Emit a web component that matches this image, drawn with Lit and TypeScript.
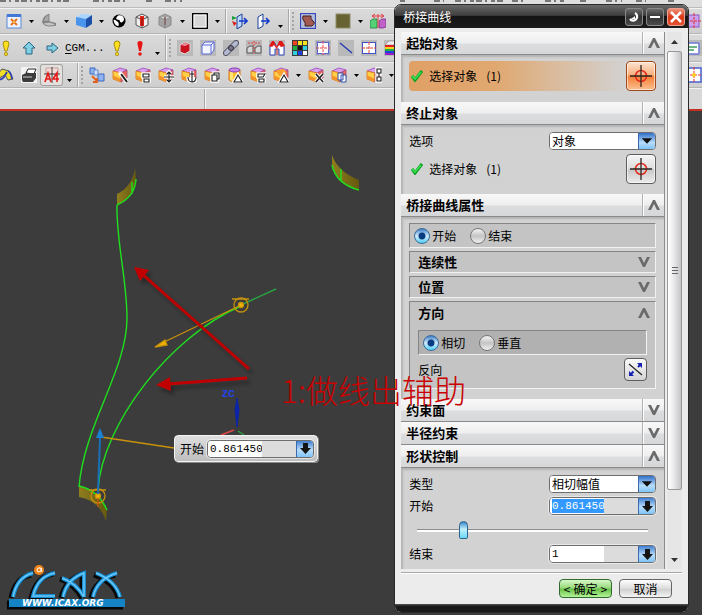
import { LitElement, html, svg, css, SVGTemplateResult, TemplateResult } from "lit";
import { customElement, property } from "lit/decorators.js";
import { classMap } from "lit/directives/class-map.js";

/* ---------- toolbar glyphs, all on a 16 x 16 grid ---------- */

const feature = svg`
  <path d="M1 4 8 1l7 2-6 3z" fill="#d9a0f0" stroke="#9a48c0" stroke-width=".8"/>
  <path d="M1 4l8 2v9l-8-3z" fill="#ffd048" stroke="#e07818" stroke-width=".9"/>
  <path d="M1.500 8.500l7 3.500v2.500l-7-3z" fill="#f59028"/>
  <path d="M9 6l6-3v8l-6 4z" fill="#e86858" stroke="#b04878" stroke-width=".8"/>`;
const badge = (d: string) => svg`
  <path d="${d}" fill="none" stroke="#fff" stroke-width="3.500"/>
  <path d="${d}" fill="#fff" stroke="#1c1c1c" stroke-width="1.100"/>`;
const withBadge = (d: string) => svg`${feature}${badge(d)}`;
const tile = svg`<rect width="16" height="16" fill="#b9b9b9"/>`;

const glyphs: Record<string, SVGTemplateResult> = {
  fit: svg`<rect x="1" y="2" width="14" height="13" fill="#eef2ff" stroke="#5b88d8"/><rect x="1" y="1" width="14" height="3" fill="#4478d8"/>
    <path d="M5 6l6 6M11 6l-6 6" stroke="#e8701c" stroke-width="2"/><path d="M8 8v2" stroke="#f8c040" stroke-width="2"/>`,
  pie: svg`<path d="M8 8V1Q2 2 1 9a7 5 0 0 0 7 4h7l0-3z" fill="#909090"/><path d="M2 10a7 4 0 0 0 13 1l-7-2z" fill="#c4c4c4" stroke="#777" stroke-width=".8"/>
    <path d="M8 8V1Q3 3 2 9z" fill="#a9a9a9" stroke="#777" stroke-width=".8"/>`,
  cube: svg`<path d="M0 4l6-3 10 1-6 4z" fill="#a9d4ff"/><path d="M0 4l10 2v9l-10-3z" fill="#4a94ec"/><path d="M10 6l6-4v9l-6 4z" fill="#1d4fa8"/>`,
  sphere: svg`<circle cx="8" cy="8" r="6.500" fill="#000"/><path d="M7 2.500q3-1 5 1 2 3 0 5-2 2-3 0 0-2-3-2-2-1 1-4z" fill="#fff"/>
    <path d="M2.500 7q1-1 3 1 3 1 2 5-4 0-5-6z" fill="#fff"/>`,
  wire: svg`<path d="M2 4l6-3 6 3v8l-6 3-6-3zM2 4l6 3 6-3M8 7v8" fill="#eee" stroke="#555"/><path d="M6 3h4v10H6z" fill="#e02418"/><path d="M8 5v8" stroke="#801010"/>`,
  wireGray: svg`<path d="M2 4l6-3 6 3v8l-6 3-6-3zM2 4l6 3 6-3M8 7v8" fill="#a4a4a4" stroke="#8a8a8a"/><path d="M8 4v8" stroke="#8a7070" stroke-width="2"/>`,
  white: svg`<rect x=".75" y=".75" width="14.500" height="14.500" fill="#d6d6d6" stroke="#000" stroke-width="1.500"/><rect x="2" y="2" width="12" height="12" fill="none" stroke="#fff"/>`,
  doorIn: svg`<path d="M5 4l5-3v12l-5 3z" fill="#bcd8ff" stroke="#1a3f98"/><path d="M7 8h8M12 5l3 3-3 3" fill="none" stroke="#1238d0" stroke-width="1.600"/>
    <path d="M0 3v4l5-2z" fill="#18a038"/><path d="M0 8l5 2-3 3z" fill="#d82020"/>`,
  doorOut: svg`<path d="M3 4l5-3v12l-5 3z" fill="#fff" stroke="#1a3f98"/><path d="M6 8h8M11 5l3 3-3 3" fill="none" stroke="#1238d0" stroke-width="1.600"/>`,
  film: svg`<rect x=".5" y=".5" width="15" height="15" fill="#b4bcdc" stroke="#3448b8" stroke-width="1.200"/><path d="M3 3h8q-1 3 2 5t-1 5H5q1-3-1-5T3 3z" fill="#a25a52" stroke="#40201c"/>`,
  olive: svg`<rect x="1" y="1" width="14" height="14" fill="#666231" stroke="#8f8d6d"/>`,
  pair: svg`<path d="M0 8l3-2h4v9H0z" fill="#55d278" stroke="#178038" stroke-width=".8"/><path d="M9 8l3-2h4v8l-3 1H9z" fill="#c060c8" stroke="#803090" stroke-width=".8"/>
    <path d="M2 3h12M5 1L2 3l3 2M11 1l3 2-3 2M8 1v14" fill="none" stroke="#e04040"/>`,
  magenta: svg`<rect x="1" y="2" width="12" height="12" fill="#c9a0f0" stroke="#9058c8"/><path d="M8 0v16M0 8h16" stroke="#e83030" stroke-dasharray="3 1"/>`,
  bangY: svg`<path d="M8 1q3 0 3 3L9 11H7L5 4q0-3 3-3z" fill="#ffe020" stroke="#a08400" stroke-width=".9"/><circle cx="8" cy="14" r="1.600" fill="#ffe020" stroke="#a08400" stroke-width=".8"/>`,
  bangR: svg`<path d="M8 1q3 0 2.500 3L9 11H7L5.500 4Q5 1 8 1z" fill="#e81414"/><circle cx="8" cy="14" r="1.800" fill="#e81414"/>`,
  up: svg`<path d="M8 2l6 6h-3v6H5V8H2z" fill="#7fd0e4" stroke="#2a6480"/>`,
  right: svg`<path d="M14 8L8 3v3H3v4h5v3z" fill="#7fd0e4" stroke="#2a6480"/>`,
  red: svg`${tile}<path d="M3 5l5-3 5 2v7l-5 3-5-2z" fill="#c81420" stroke="#ddd" stroke-width="1"/><path d="M4 5l4-2 4 1-4 2z" fill="#f090a0"/>`,
  box: svg`${tile}<path d="M2 5l3-3h9v8l-3 4H2zM2 5h9v9M11 5l3-3" fill="#f4f6ff" stroke="#5868d8"/>`,
  link: svg`${tile}<path d="M3 13L13 3" stroke="#556" stroke-width="6" stroke-linecap="round"/><path d="M3 13L13 3" stroke="#b4bad0" stroke-width="4" stroke-linecap="round"/><circle cx="8" cy="8" r="2.500" fill="#778" stroke="#334"/>`,
  split: svg`${tile}<path d="M1 8l3-2h3v7H1zM9 8l3-2h3v7H9z" fill="#d8d8d8" stroke="#555"/><path d="M2 3h5M9 3h5M8 1v13" stroke="#e04040" stroke-dasharray="2 1"/>`,
  magnet: svg`${tile}<path d="M1 15V6l4-4 3 5 3-5 4 4v9h-5V9H6v6z" fill="#fff" stroke="#3048c0"/><path d="M0 6l3-5h2l2 5 1 0 2-5h3l3 5-4 1-2-2-2 3H7L5 5 3 7z" fill="#e01818"/><path d="M8 6v9" stroke="#e04040"/>`,
  palette: svg`<rect width="16" height="16" fill="#3c3c3c"/><path d="M1 1h4v4H1z" fill="#f04020"/><path d="M6 1h4v4H6z" fill="#f4e420"/><path d="M11 1h4v4h-4z" fill="#f4e420"/>
    <path d="M1 6h4v4H1z" fill="#20b040"/><path d="M6 6h4v4H6z" fill="#111"/><path d="M11 6h4v4h-4z" fill="#30d0e0"/><path d="M1 11h4v4H1z" fill="#30d0e0"/><path d="M6 11h4v4H6z" fill="#2040e0"/><path d="M11 11h4v4h-4z" fill="#fff"/>`,
  cross: svg`${tile}<path d="M2 2q3 1 6 0 3 1 6 0-1 3 0 6-1 3 0 6-3-1-6 0-3-1-6 0 1-3 0-6 1-3 0-6z" fill="#fff" stroke="#4050c8"/><path d="M8 1v14M1 8h14" stroke="#e84040" stroke-dasharray="3 1"/>`,
  line: svg`${tile}<path d="M2 3l12 10" stroke="#2038b8" stroke-width="1.300"/>`,
  grid: svg`${tile}<rect x="1.500" y="2.500" width="13" height="11" fill="#fff" stroke="#4050c8"/><path d="M8 2v12M1 8h14" stroke="#e84040" stroke-dasharray="3 1"/>`,
  rainbow: svg`${tile}<path d="M1 5l4-4h11v4z" fill="#eee" stroke="#888" stroke-width=".6"/><path d="M1 6h15" stroke="#e02020" stroke-width="2"/><path d="M1 8h15" stroke="#f4d020" stroke-width="2"/><path d="M1 10h15" stroke="#20b040" stroke-width="2"/><path d="M1 12h15" stroke="#2040e0" stroke-width="2"/><path d="M1 14h15" stroke="#9020c0" stroke-width="2"/>`,
  sheet: svg`${tile}<rect x="1" y="3" width="12" height="11" rx="1" fill="#fff" stroke="#6878d8" stroke-width="1.500"/><path d="M3 7h8M3 10h5" stroke="#38a060" stroke-width="1.500"/>`,
  paint: svg`<path d="M4 2l7 2 4 8-5 1-3-5-6 3-2-3z" fill="#f0e028" stroke="#555"/><path d="M0 11q3 3 6-1l3-5M10 4q3 1 4 8" fill="none" stroke="#3040b0" stroke-width="1.800"/>`,
  printer: svg`<rect width="16" height="16" fill="#f4f4f4"/><path d="M5 6l2-4h8l-2 5z" fill="#fff" stroke="#222"/><path d="M1 8l4-2h10v5l-3 4H2l-1-2z" fill="#3c3c3c"/><path d="M2 10h9" stroke="#ccc"/>`,
  a4: svg`<path d="M2 1h12v6H2z" fill="#f4dcd8" stroke="#c0a0a0"/><path d="M8 0v16M0 7h16" stroke="#222" stroke-width=".8"/><path d="M1 15l3-9 3 9M2 12h4M13 15V6l-4 6h6" fill="none" stroke="#e81818" stroke-width="1.600"/>`,
  sketch: svg`<path d="M1 1h5v6H1zM9 7h6v7H9z" fill="#8fb4f0" stroke="#3c68c0"/><path d="M5 3h4v5H5z" fill="#d0e0ff" stroke="#5c88d0"/><path d="M3 9l5 5M8 11v4H4" fill="none" stroke="#e06020" stroke-width="1.800"/>`,
  wand: svg`${feature}<path d="M8 6l7 9" stroke="#fff" stroke-width="4"/><path d="M9 7l6 8" stroke="#1c1c1c" stroke-width="2"/><path d="M8 4v4M6 6h4" stroke="#fff"/>`,
  revolve: withBadge("M8 7h6v3H8zM9 12h5v3H9z"),
  move: withBadge("M11 5v10M6 10h10M9 7l2-2 2 2M9 13l2 2 2-2"),
  anchor: withBadge("M11 4v11M7 10q0 5 4 5t4-5M9 7h4"),
  copyBox: withBadge("M8 8h5v6H8zM10 8V6h5v6h-2"),
  cyl: svg`<path d="M2 3v10q6 4 11 0V3z" fill="#ffc030" stroke="#d87818"/><path d="M3 4v9q2 1 3 1V4z" fill="#ffe478"/><ellipse cx="7.500" cy="3" rx="5.500" ry="2" fill="#c880e8" stroke="#8040b0"/>${badge("M11 8l4 7H7z")}`,
  stack: withBadge("M8 7h7l-2 3H8zM9 12h5v3H9z"),
  tri: svg`${feature}<path d="M3 3l8-1 3 4-8 3z" fill="#f8a030"/>${badge("M11 8l4 7H7z")}`,
  del: svg`${feature}<path d="M8 7l7 8M15 7l-7 8" stroke="#fff" stroke-width="3.500"/><path d="M8 7l7 8M15 7l-7 8" stroke="#222" stroke-width="1.600"/>`,
  doc: svg`${feature}<path d="M7 6h5v7H7zM10 8h5v7h-5z" fill="#fff" stroke="#3050a8"/>`,
  tree: withBadge("M11 2h4v4h-4zM11 10h4v4h-4zM13 6v4"),
  target: svg`<rect x="1" y="1" width="14" height="14" fill="#fff" stroke="#4860d0" stroke-width="1.500"/><path d="M8 0v16M0 8h16" stroke="#e83030" stroke-dasharray="3 1"/><circle cx="8" cy="8" r="2" fill="#f8d020"/>`,
};

/* Entry syntax: glyph name, "v" / "w" for a drop arrow (middle / low), "|" separator, ":" grip, "T" text button, ">" push to the end */
const rowOne = ["fit", "v", "pie", "v", "cube", "v", "sphere", "wire", "wireGray", "v", "white", "v", "|", "doorIn", "doorOut", "w", "|", ":", "film", "v", "olive", "v", "pair", ">", "magenta"];
const rowTwo = ["bangY", "up", "right", "T", "bangY", "bangR", "w", "|", ":", "red", "box", "link", "split", "magnet", "palette", "cross", "line", "grid", "rainbow", ">", "sheet"];
const rowThree = ["paint", "printer", "a4", "w", "|", ":", "sketch", "wand", "revolve", "move", "anchor", "copyBox", "cyl", "stack", "tri", "v", "del", "doc", "v", "tree", "v", ">", "target"];

@customElement("tool-row")
export class ToolRow extends LitElement {
  @property({ attribute: false }) items: string[] = [];
  static styles = css`
    :host { display: flex; align-items: center; overflow: hidden; }
    button { border: 0; background: none; padding: 0; margin: 0; color: #000; flex: none; }
    .tool { width: 23px; height: 22px; display: grid; place-items: center; }
    .tool svg { width: 16px; height: 16px; display: block; }
    .framed { box-shadow: inset 0 0 0 1px #a2a2a2; background: #e4e0dc; border-radius: 3px; }
    .drop { width: 12px; height: 22px; display: grid; place-items: center; }
    .low { align-items: end; padding-bottom: 4px; }
    .drop svg { width: 5px; height: 3px; display: block; }
    .text { width: 42px; font: 11px "Liberation Mono", monospace; text-align: left; padding-left: 2px; white-space: nowrap; overflow: hidden; }
    .text u { text-underline-offset: 2px; }
    .sep { flex: none; width: 5px; align-self: stretch; background: linear-gradient(90deg, transparent 2px, #a8a8a8 2px, #a8a8a8 3px, #f4f4f4 3px, #f4f4f4 4px, transparent 4px); }
    .grip { flex: none; width: 5px; height: 18px; background: repeating-linear-gradient(180deg, #a4a4a4 0 2px, transparent 2px 4px); background-size: 2px 18px; background-repeat: no-repeat; background-position: 1px 0; }
    .push { flex: 1; }
  `;
  private item(name: string): TemplateResult {
    if (name === "|") return html`<span class="sep"></span>`;
    if (name === ":") return html`<span class="grip"></span>`;
    if (name === ">") return html`<span class="push"></span>`;
    if (name === "T") return html`<button class="text"><u>C</u>GM...</button>`;
    if (name === "v" || name === "w")
      return html`<button class=${classMap({ drop: true, low: name === "w" })} aria-label="more"><svg viewBox="0 0 5 3"><path d="M0 0h5L2.500 3z"/></svg></button>`;
    return html`<button class=${classMap({ tool: true, framed: name === "a4" })} aria-label=${name}><svg viewBox="0 0 16 16">${glyphs[name]}</svg></button>`;
  }
  render() {
    return html`${this.items.map((n) => this.item(n))}`;
  }
}

/* Value box with a short text area and a blue drop button */
@customElement("value-box")
export class ValueBox extends LitElement {
  @property() value = "";
  @property() label = "";
  @property({ type: Boolean }) marked = false;
  static styles = css`
    :host { display: flex; box-sizing: border-box; width: 107px; height: 18px; border: 1px solid #6e6e6e; border-radius: 4px; background: #dcdcdc; overflow: hidden; box-shadow: 0 0 0 1px #ffffff80; }
    input { box-sizing: border-box; width: 54px; border: 0; padding: 0 0 0 2px; margin: 0; outline: 0; background: #fff; color: #000; font: 11px "Liberation Mono", monospace; }
    input.marked { background: #3399ff; color: #fff; border: 1px solid #fff; border-width: 1px 0 1px 2px; padding-left: 0; }
    button { margin-left: auto; width: 17px; border: 0; border-left: 1px solid #3b68b0; padding: 0; display: grid; place-items: center; background: linear-gradient(#3f7fd0, #b8dcfa 55%, #7fc4f8); }
    svg { width: 11px; height: 11px; display: block; }
  `;
  render() {
    return html`<input class=${classMap({ marked: this.marked })} aria-label=${this.label} .value=${this.value} />
      <button aria-label="options"><svg viewBox="0 0 11 11"><path d="M3 0h5v5h3L5.500 11 0 5h3z" fill="#141414"/></svg></button>`;
  }
}

const chevron = (open: boolean) =>
  html`<svg class="chev" viewBox="0 0 12 12"><path d=${open ? "M0 11L5 1h2l5 10H9L6 5 3 11z" : "M0 1l5 10h2l5-10H9L6 7 3 1z"} fill="#6a6a6a"/></svg>`;
const tick = html`<svg class="tick" viewBox="0 0 12 12"><path d="M1 6l3 4L11 1" fill="none" stroke="#0ca024" stroke-width="3.200"/><path d="M1 6l3 3 6-7" fill="none" stroke="#35dc4c" stroke-width="1.800"/></svg>`;
const aim = html`<svg viewBox="0 0 22 22"><circle cx="11" cy="11" r="5.500" fill="none" stroke="#e42a1c" stroke-width="1.500"/><path d="M11 0v22M0 11h22" stroke="#2c2420" stroke-width="1.300"/></svg>`;

@customElement("bridge-dialog")
export class BridgeDialog extends LitElement {
  static styles = css`
    :host { display: flex; flex-direction: column; box-sizing: border-box; border: 1px solid #2a2a2a; border-radius: 7px; background: #ececec; overflow: hidden; color: #000; font: 12px/16px "Noto Sans CJK SC", "Liberation Sans", sans-serif; }
    * { box-sizing: border-box; }
    button { font: inherit; color: inherit; margin: 0; padding: 0; }
    .title { flex: none; height: 23px; padding: 0 3px 0 8px; display: flex; align-items: center; gap: 3px; background: linear-gradient(#6a6a6a, #3e3e3e 45%, #141414 50%, #1c1c1c); color: #fff; }
    .title h1 { flex: 1; margin: 0; font: inherit; }
    .win { width: 18px; height: 18px; border: 1px solid #8a8a8a; border-radius: 3px; background: linear-gradient(#6c6c6c, #333 50%, #4a4a4a); display: grid; place-items: center; }
    .win svg { width: 12px; height: 12px; display: block; }
    .close { background: linear-gradient(#f09078, #d83818 50%, #e85030); border-color: #e8a090; }
    .main { flex: 1; min-height: 0; display: flex; gap: 2px; margin: 4px 6px 0; }
    .list { flex: 1; min-width: 0; overflow: hidden; border-right: 1px solid #8c8c8c; }
    .head { width: 100%; height: 23px; border: 0; border-bottom: 1px solid #8a8a8a; padding: 0 0 0 5px; display: flex; align-items: center; background: linear-gradient(#f8f8f8, #eeeeef 50%, #dcdddf 55%, #d6d7d9); font-weight: bold; font-size: 13px; text-align: left; }
    .head span { flex: 1; }
    .head .chev { width: 22px; height: 22px; padding: 5px 4px 5px 5px; border-left: 1px solid #b0b0b0; box-shadow: inset 1px 0 #fff; }
    .body { background: #d2d2d2; padding: 7px 8px 10px; display: flex; flex-direction: column; gap: 4px; box-shadow: inset 2px 2px 2px #b4b4b4; }
    .first { padding-top: 6px; padding-bottom: 11px; }
    .tight { gap: 3px; padding-top: 6px; padding-bottom: 10px; }
    .row { display: flex; align-items: center; justify-content: space-between; min-height: 18px; }
    .pick { display: flex; align-items: center; gap: 6px; padding-left: 2px; }
    .count { padding-left: 3px; }
    .hot { border-radius: 4px; background: linear-gradient(90deg, #e0a066, #e0a870 35%, #d2d2d2 88%); }
    .tick { width: 12px; height: 12px; display: block; }
    .aim { width: 30px; height: 30px; border: 1px solid #5e5e5e; border-radius: 4px; background: linear-gradient(#f6f6f6, #dcdcdc 50%, #c8c8c8 52%, #ececec); display: grid; place-items: center; box-shadow: inset 0 0 0 1px #ffffff90; }
    .aim svg { width: 22px; height: 22px; display: block; }
    .hot .aim { background: linear-gradient(#fce4d0, #f8b080 45%, #f48038 52%, #fcc090); border-color: #a04818; }
    .choice { width: 107px; height: 18px; display: flex; border: 1px solid #6e6e6e; border-radius: 4px; background: #fff; overflow: hidden; }
    .choice select { flex: 1; min-width: 0; appearance: none; border: 0; outline: 0; background: #fff; font: inherit; color: #000; padding: 0 0 0 2px; }
    .choice svg { width: 17px; height: 16px; display: block; background: linear-gradient(#2f6fc8, #b8dcfa 60%, #7fc4f8); border-left: 1px solid #3b68b0; }
    .box { border: 1px solid; border-color: #858585 #f2f2f2 #f2f2f2 #858585; background: #c4c4c4; }
    .radios { height: 25px; display: flex; align-items: center; gap: 14px; padding-left: 4px; }
    .radios label { display: flex; align-items: center; gap: 2px; }
    .radios input { appearance: none; width: 16px; height: 16px; margin: 0; border: 1px solid #777; border-radius: 50%; background: linear-gradient(#f4f4f4, #c4c4c4 50%, #f0f0f0); }
    .radios input:checked { border-color: #3b6a98; background: radial-gradient(circle, #083c80 3px, #ffffff00 4px), linear-gradient(#3f80c8, #d4ecfc 50%, #50d0f8); }
    .sub { width: 100%; height: 22px; padding: 0 5px 0 8px; border: 0; background: none; display: flex; align-items: center; justify-content: space-between; font-weight: bold; font-size: 13px; }
    .sub .chev { width: 12px; height: 12px; display: block; }
    .sub.box { border: 1px solid; border-color: #858585 #f2f2f2 #f2f2f2 #858585; background: #c4c4c4; }
    .inner { padding: 0 8px 7px; display: flex; flex-direction: column; gap: 3px; }
    .dark { background: #b1b1b1; margin-top: 6px; }
    .flip { width: 23px; height: 23px; border: 1px solid #5e5e5e; border-radius: 4px; background: linear-gradient(#fafafa, #d4d4d4); display: grid; place-items: center; }
    .flip svg { width: 15px; height: 15px; display: block; }
    .slide { appearance: none; height: 22px; margin: 0 8px; background: linear-gradient(#8e8e8e, #8e8e8e 50%, #fff 50%) 0 10px / 100% 3px no-repeat; outline: 0; flex: none; }
    .slide::-webkit-slider-thumb { appearance: none; width: 9px; height: 18px; border: 1px solid #2a628c; border-radius: 5px 5px 2px 2px; background: linear-gradient(#3a88c8, #c0f0fc 45%, #6ad8f8); }
    .bar { width: 15px; flex: none; display: flex; flex-direction: column; background: #e6e6e6; }
    .bar button { height: 19px; border: 0; background: none; display: grid; place-items: center; }
    .bar button svg { width: 7px; height: 4px; display: block; }
    .lane { flex: 1; }
    .thumb { height: 88%; border: 1px solid #999; border-radius: 2px; background: linear-gradient(90deg, #fff, #ececee 40%, #c4c4c8); display: grid; place-items: center; }
    .thumb i { width: 6px; height: 8px; background: repeating-linear-gradient(#666 0 1px, transparent 1px 3px); }
    .foot { flex: none; margin: 3px 6px 0; padding: 6px 10px 6px; border-top: 1px solid #a8a8a8; box-shadow: inset 0 1px #fff; display: flex; justify-content: flex-end; gap: 7px; }
    .foot button { width: 53px; height: 19px; border: 1px solid #666; border-radius: 4px; background: linear-gradient(#fff, #dcdcdc 50%, #cdcdcd 52%, #f4f4f4); display: flex; align-items: center; justify-content: center; gap: 3px; line-height: 16px; }
    .foot .ok { border-color: #2f6a2f; background: linear-gradient(#d8f8c8, #94d878 48%, #68c048 52%, #b4f498); }
    .base { flex: none; height: 8px; background: linear-gradient(#555, #1a1a1a 30%); }
  `;
  private head(text: string, open: boolean) {
    return html`<button class="head" aria-expanded=${open}><span>${text}</span>${chevron(open)}</button>`;
  }
  private choice(id: string, text: string) {
    return html`<span class="choice"><select id=${id}><option>${text}</option></select>
      <svg viewBox="0 0 17 16"><path d="M3 5h11l-5.500 6z" fill="#101010"/></svg></span>`;
  }
  private radios(name: string, a: string, b: string, dark = false) {
    return html`<div class=${classMap({ box: true, radios: true, dark })}>
      <label><input type="radio" name=${name} checked />${a}</label>
      <label><input type="radio" name=${name} />${b}</label></div>`;
  }
  private pick(hot: boolean) {
    return html`<div class=${classMap({ row: true, hot })}><span class="pick">${tick}<span>选择对象</span><span class="count">(1)</span></span>
      <button class="aim" aria-label="选择对象">${aim}</button></div>`;
  }
  render() {
    return html`
      <header class="title">
        <h1>桥接曲线</h1>
        <button class="win" aria-label="reset"><svg viewBox="0 0 12 12"><path d="M7 2a4 4 0 1 1-5 6" fill="none" stroke="#fff" stroke-width="2.200"/><path d="M7 5v3H3z" fill="#fff"/></svg></button>
        <button class="win" aria-label="minimize"><svg viewBox="0 0 12 12"><path d="M1 6h10" stroke="#fff" stroke-width="2"/></svg></button>
        <button class="win close" aria-label="close"><svg viewBox="0 0 12 12"><path d="M1 1l10 10M11 1L1 11" stroke="#fff" stroke-width="2.500"/></svg></button>
      </header>
      <div class="main">
        <div class="list">
          ${this.head("起始对象", true)}
          <div class="body first">${this.pick(true)}</div>
          ${this.head("终止对象", true)}
          <div class="body">
            <div class="row"><label for="option">选项</label>${this.choice("option", "对象")}</div>
            ${this.pick(false)}
          </div>
          ${this.head("桥接曲线属性", true)}
          <div class="body tight">
            ${this.radios("end", "开始", "结束")}
            <button class="sub box">连续性${chevron(false)}</button>
            <button class="sub box">位置${chevron(false)}</button>
            <div class="box">
              <button class="sub">方向${chevron(true)}</button>
              <div class="inner">
                ${this.radios("direction", "相切", "垂直", true)}
                <div class="row"><span>反向</span>
                  <button class="flip" aria-label="反向"><svg viewBox="0 0 15 15"><path d="M1 2l13 11" stroke="#222" stroke-width="1.200"/><path d="M2 13l3.500-3.500M10 5l3-3" stroke="#1420b0" stroke-width="2"/><path d="M9 1h5v5zM1 9v5h5z" fill="#1420b0"/></svg></button>
                </div>
              </div>
            </div>
          </div>
          ${this.head("约束面", false)} ${this.head("半径约束", false)} ${this.head("形状控制", true)}
          <div class="body">
            <div class="row"><label for="kind">类型</label>${this.choice("kind", "相切幅值")}</div>
            <div class="row"><span>开始</span><value-box label="开始" value="0.8614506" marked></value-box></div>
            <input class="slide" type="range" aria-label="开始" min="0" max="100" value="19" />
            <div class="row"><span>结束</span><value-box label="结束" value="1"></value-box></div>
            <input class="slide" type="range" aria-label="结束" min="0" max="100" value="19" />
          </div>
        </div>
        <div class="bar">
          <button aria-label="up"><svg viewBox="0 0 7 4"><path d="M0 4h7L3.500 0z" fill="#333"/></svg></button>
          <div class="lane"><div class="thumb"><i></i></div></div>
          <button aria-label="down"><svg viewBox="0 0 7 4"><path d="M0 0h7L3.500 4z" fill="#333"/></svg></button>
        </div>
      </div>
      <footer class="foot">
        <button class="ok"><span>&lt;</span><span>确定</span><span>&gt;</span></button>
        <button>取消</button>
      </footer>
      <div class="base"></div>`;
  }
}

@customElement("app-root")
export class AppRoot extends LitElement {
  static styles = css`
    :host { display: flex; flex-direction: column; position: relative; height: 100vh; overflow: hidden; background: #3c3c3c; font: 12px/16px "Noto Sans CJK SC", "Liberation Sans", sans-serif; }
    .strip { flex: none; height: 8px; background: #dedede; border-bottom: 1px solid #bcbcbc; box-sizing: border-box; }
    .strip svg { display: block; width: 100%; height: 2px; }
    tool-row { flex: none; height: 26px; box-sizing: border-box; border-top: 1px solid #f2f2f2; border-bottom: 1px solid #b4b4b4; background: linear-gradient(#dadada, #cecece); padding-left: 2px; margin-right: -3px; }
    .second { height: 28px; padding-left: 0; }
    .pull { padding-left: 0; }
    .shift { flex: none; overflow: hidden; display: grid; }
    .shift tool-row { margin-left: -6px; }
    .prompt { flex: none; height: 23px; box-sizing: border-box; background: #d8d8d8; border-top: 1px solid #f2f2f2; border-bottom: 2px solid #c43024; display: flex; }
    .prompt span { flex: none; width: 204px; border-right: 1px solid #a8a8a8; box-shadow: 1px 0 #f4f4f4; }
    .stage { flex: 1; min-height: 0; width: 100%; display: block; }
    .float { position: absolute; left: 174px; top: 435px; box-sizing: border-box; height: 27px; padding: 0 3px 0 5px; display: flex; align-items: center; gap: 3px; background: linear-gradient(#dedede, #bebebe); border: 1px solid #f4f4f4; border-radius: 4px; box-shadow: 1px 1px #8a8a8a; }
    bridge-dialog { position: absolute; right: 13px; top: 4px; bottom: 2px; width: 42%; min-width: 294px; max-width: 295px; }
    .note { position: absolute; left: 281px; top: 369px; font: 300 32px/40px "Noto Sans CJK SC", sans-serif; color: #c80000; white-space: nowrap; }
    .logo { font: italic bold 9px "DejaVu Sans", sans-serif; fill: #fff; }
    .axis { font: bold 12px "Liberation Sans", sans-serif; fill: #2444e0; }
  `;
  render() {
    return html`
      <div class="strip"><svg><path d="M0 1h70M93 1h32M146 1h9M165 1h17M400 1h5M434 1h10M455 1h50M512 1h14M545 1h20M580 1h8M606 1h16M636 1h10M668 1h8" stroke="#111" stroke-dasharray="6 3 2 4 4 2" fill="none"/></svg></div>
      <tool-row .items=${rowOne}></tool-row>
      <div class="shift"><tool-row class="second" .items=${rowTwo}></tool-row></div>
      <div class="shift"><tool-row class="pull" .items=${rowThree}></tool-row></div>
      <div class="prompt"><span></span></div>
      <svg class="stage">
        <defs>
          <linearGradient id="gold" x1="0" y1="0" x2="1" y2="0"><stop offset="0" stop-color="#8f7d1e"/><stop offset="1" stop-color="#66590f"/></linearGradient>
          <filter id="soft" x="-20%" y="-20%" width="140%" height="150%"><feDropShadow dx="3" dy="4" stdDeviation="2" flood-color="#000" flood-opacity=".35"/></filter>
        </defs>
        <g transform="translate(0 -111)" fill="none">
          <path d="M117 194Q132 187 135 168L136 180Q135 197 117 205z" fill="url(#gold)"/>
          <path d="M332 155Q338 172 359 180V190Q338 184 332 166z" fill="url(#gold)"/>
          <path d="M79 486Q98 490 107 510L106 521Q100 501 79 497z" fill="url(#gold)"/>
          <g stroke="#1ee01e" stroke-width="1.400">
            <path d="M117 205Q135 197 136 179M132 182v12M332 165Q336 184 359 190M341 169v12M79 486Q98 490 107 510"/>
            <path d="M117 205C116 240 127 280 127 318C127 370 84 425 79 487"/>
            <path d="M98 490C102 425 170 336 241 306"/>
          </g>
          <path d="M241 305l35-16" stroke="#2aa040" stroke-width="1.400"/>
          <g stroke="#c8920c" stroke-width="1.300">
            <path d="M241 305L160 344M101 437l73 11"/>
            <path d="M155 347l10-7 2 5z" fill="#f0b400"/>
            <circle cx="241" cy="305" r="7"/><circle cx="98" cy="496" r="7"/>
            <path d="M232 299h17M89 490h17"/>
            <circle cx="241" cy="305" r="2.500" fill="#f0b400"/><circle cx="98" cy="496" r="2.500" fill="#f0b400"/>
          </g>
          <path d="M98 498v9" stroke="#d04818"/>
          <path d="M98 494l2-56" stroke="#1870b8" stroke-width="2"/>
          <path d="M100 428l4 10h-8z" fill="#1a80d0"/>
          <path d="M221 435l13-5" stroke="#e04848" stroke-width="1.500"/><path d="M238 431l6 4" stroke="#30a040" stroke-width="1.500"/>
          <path d="M237 398l2 12-2 17-2-17z" fill="#0c24a8" stroke="#0c24a8"/>
          <text class="axis" x="222" y="397">zc</text>
          <g filter="url(#soft)" fill="#c00000">
            <path d="M249 369L141 273" stroke="#c00000" stroke-width="3"/><path d="M134 267l15 3-9 11z"/>
            <path d="M247 378l-79 6" stroke="#c00000" stroke-width="3"/><path d="M156 385l14-8 1 14z"/>
          </g>
          <g stroke="#080808" stroke-width="5">
            <path d="M11 598Q15 578 31 575M53 574Q36 577 31 598h22M61 598Q65 580 82 574v24M60 579Q74 584 82 598M91 598Q95 580 115 575M94 575Q114 582 118 598"/>
            <path d="M7 605h116" stroke-width="9"/>
          </g>
          <path d="M9 603h116" stroke="#1484c4" stroke-width="8"/>
          <path d="M13 597Q17 577 33 573M55 573Q38 576 33 596h22M63 597Q67 579 84 573v24M62 578Q76 583 84 597M93 597Q97 579 117 573M96 573Q116 581 120 597" stroke="#168cd0" stroke-width="4"/>
          <path d="M13 597Q17 577 33 573M55 573Q38 576 33 596h22M63 597Q67 579 84 573v24M62 578Q76 583 84 597M93 597Q97 579 117 573M96 573Q116 581 120 597" stroke="#6cc8f8" stroke-width="1.500"/>
          <circle cx="39" cy="570" r="5" fill="#f08418"/><path d="M41 568q-4-1-4 2t4 1v-3l1 4" stroke="#fff"/>
          <text class="logo" x="22" y="606">WWW.ICAX.ORG</text>
        </g>
      </svg>
      <div class="float"><span>开始</span><value-box label="开始" value="0.8614506"></value-box></div>
      <bridge-dialog></bridge-dialog>
      <div class="note">1:做线出辅助</div>`;
  }
}
